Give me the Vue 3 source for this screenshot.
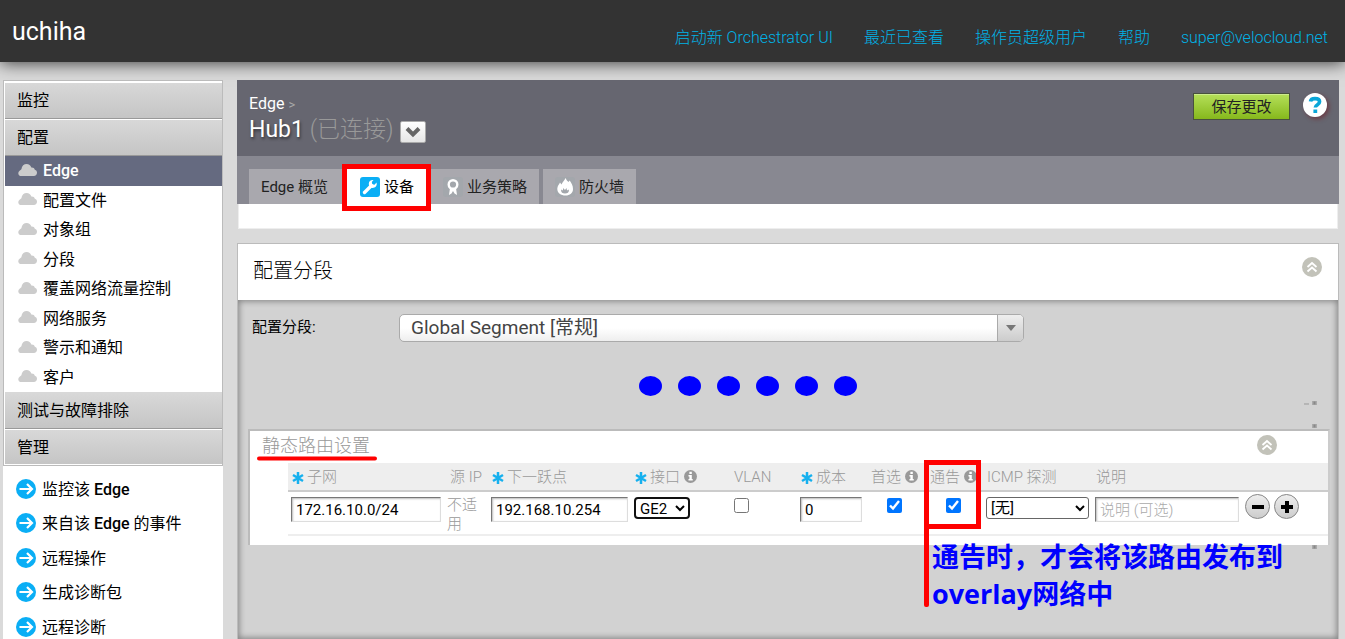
<script setup>
import { ref } from 'vue'

const topLinks = ['启动新 Orchestrator UI', '最近已查看', '操作员超级用户', '帮助', 'super@velocloud.net']
const configItems = ['Edge', '配置文件', '对象组', '分段', '覆盖网络流量控制', '网络服务', '警示和通知', '客户']
const shortcuts = [
  { before: '监控该 ', strong: 'Edge', after: '' },
  { before: '来自该 ', strong: 'Edge', after: ' 的事件' },
  { before: '远程操作', strong: '', after: '' },
  { before: '生成诊断包', strong: '', after: '' },
  { before: '远程诊断', strong: '', after: '' },
]

const subnet = ref('172.16.10.0/24')
const nextHop = ref('192.168.10.254')
const cost = ref('0')
const vlan = ref(false)
const preferred = ref(true)
const advertise = ref(true)
const description = ref('')
</script>

<template>
  <div class="page">
    <header class="topbar">
      <div class="brand">uchiha</div>
      <nav class="toplinks">
        <a v-for="link in topLinks" :key="link" href="#">{{ link }}</a>
      </nav>
    </header>

    <div class="layout">
      <aside class="sidebar">
        <nav class="menu">
          <a class="group" href="#">监控</a>
          <a class="group" href="#">配置</a>
          <ul class="items">
            <li v-for="(item, i) in configItems" :key="item" :class="{ active: i === 0 }">
              <a href="#">
                <svg class="cloud" viewBox="0 0 20 12" aria-hidden="true">
                  <path d="M3 12a3 3 0 0 1-.4-5.2L4.400 5.200C4.800 1.800 7 0 9.600 0c2.400 0 4 1.400 4.700 3.500 2-.2 3 .7 3.500 2.200C19.300 6.200 20 7.200 20 8.600 20 10.600 18.700 12 16.800 12z" />
                </svg>
                <span>{{ item }}</span>
              </a>
            </li>
          </ul>
          <a class="group" href="#">测试与故障排除</a>
          <a class="group" href="#">管理</a>
        </nav>
        <ul class="shortcuts">
          <li v-for="s in shortcuts" :key="s.before">
            <a href="#">
              <svg class="arrow" viewBox="0 0 20 20" aria-hidden="true">
                <circle cx="10" cy="10" r="10" fill="#0aaef5" />
                <path d="M3.500 10h12M11 5l5 5-5 5" fill="none" stroke="#fff" stroke-width="2.200" />
              </svg>
              <span>{{ s.before }}<b v-if="s.strong">{{ s.strong }}</b>{{ s.after }}</span>
            </a>
          </li>
        </ul>
      </aside>

      <main class="main">
        <section class="head">
          <div class="titlebar">
            <div class="titles">
              <div class="crumb"><a href="#">Edge</a> <span>&gt;</span></div>
              <div class="name">
                <h1>Hub1 <span>(已连接)</span></h1>
                <button class="drop" type="button" aria-label="切换 Edge">
                  <svg viewBox="0 0 16 12" aria-hidden="true"><path d="M2 2.500l6 6 6-6" fill="none" stroke="#666" stroke-width="4" /></svg>
                </button>
              </div>
            </div>
            <div class="actions">
              <button class="save" type="button">保存更改</button>
              <button class="help" type="button" aria-label="帮助">
                <svg viewBox="0 0 24 24" aria-hidden="true">
                  <circle cx="12" cy="12" r="12" fill="#fff" />
                  <path d="M7.500 8.500C7.800 6.200 9.500 5.600 12 5.600s4.600 1 4.600 3.200c0 3-4.200 2.700-4.300 5.700" fill="none" stroke="#0aa6d8" stroke-width="3.600" />
                  <path d="M10.400 16.500h3.800V20h-3.800z" fill="#0aa6d8" />
                </svg>
              </button>
            </div>
          </div>
          <nav class="tabs">
            <a class="tab overview" href="#">Edge 概览</a>
            <a class="tab current" href="#">
              <svg viewBox="0 0 20 20" aria-hidden="true">
                <rect width="20" height="20" rx="3" fill="#0aaef5" />
                <path d="M4.500 15.500l7-7" stroke="#fff" stroke-width="3.400" stroke-linecap="round" />
                <path d="M16.500 5.500a4 4 0 1 1-3-2.500l-1.700 2 .5 2.300 2.200.4z" fill="#fff" />
              </svg>
              <span>设备</span>
              <i class="mark-tab"></i>
            </a>
            <a class="tab policy" href="#">
              <svg viewBox="0 0 20 20" aria-hidden="true">
                <rect width="20" height="20" rx="3" fill="#a3a7ac" />
                <path d="M7 11l-1 7 2.500-1.500L10 14l1.500 2.500L14 18l-1-7z" fill="#fff" />
                <circle cx="10" cy="7.500" r="4.300" fill="#a3a7ac" stroke="#fff" stroke-width="2.400" />
              </svg>
              <span>业务策略</span>
            </a>
            <a class="tab firewall" href="#">
              <svg viewBox="0 0 20 20" aria-hidden="true">
                <rect width="20" height="20" rx="3" fill="#a3a7ac" />
                <path d="M10.500 1c.8 2 2 3 3 4l1.200-1.500C16.500 6 18 8.500 18 12c0 4-3 6.500-7.500 6.500S2 16 2.300 11.500C2.500 9 4 7.500 5 5.500l1.500 2C7.500 5 9.500 3.500 10.500 1z" fill="#fff" />
                <path d="M6 12.500l2 1V11l2 2 1.500-2 .5 2.500 2-1c0 3-1.500 4-4 4s-4-1-4-4z" fill="#a3a7ac" />
              </svg>
              <span>防火墙</span>
            </a>
          </nav>
          <div class="strip"></div>
        </section>

        <section class="segment">
          <div class="segment-head">
            <h2>配置分段</h2>
            <button class="collapse" type="button" aria-label="折叠">
              <svg viewBox="0 0 20 20" aria-hidden="true">
                <circle cx="10" cy="10" r="10" fill="#c2c2b9" />
                <path d="M5.500 10L10 6l4.500 4M5.500 14.500l4.500-4 4.500 4" fill="none" stroke="#fff" stroke-width="1.800" />
              </svg>
            </button>
          </div>

          <div class="segment-body">
            <div class="field">
              <label for="segment">配置分段:</label>
              <div class="combo">
                <select id="segment"><option>Global Segment [常规]</option></select>
                <span class="combo-arrow"></span>
              </div>
            </div>

            <div class="dots"><i v-for="n in 6" :key="n"></i></div>

            <div class="routes">
              <svg class="ticks" viewBox="0 0 30 152" aria-hidden="true">
                <path d="M0 4h5" stroke="#999" />
                <path d="M8 3h5M8 26h5M8 147h5" stroke="#aaa" stroke-width="4" />
                <path d="M9.500 3h2M9.500 26h2M9.500 147h2" stroke="#888" stroke-width="3" />
              </svg>
              <div class="routes-head">
                <h3>静态路由设置
                  <svg class="underline" viewBox="0 0 120 5" aria-hidden="true"><path d="M2 2.500h116" fill="none" stroke="red" stroke-width="4" stroke-linecap="round" /></svg>
                </h3>
                <button class="collapse" type="button" aria-label="折叠">
                  <svg viewBox="0 0 20 20" aria-hidden="true">
                    <circle cx="10" cy="10" r="10" fill="#c2c2b9" />
                    <path d="M5.500 10L10 6l4.500 4M5.500 14.500l4.500-4 4.500 4" fill="none" stroke="#fff" stroke-width="1.800" />
                  </svg>
                </button>
              </div>
              <table>
                <colgroup>
                  <col class="c-subnet" /><col class="c-source" /><col class="c-hop" /><col class="c-if" /><col class="c-vlan" />
                  <col class="c-cost" /><col class="c-flag" /><col class="c-flag" /><col class="c-icmp" /><col class="c-desc" /><col />
                </colgroup>
                <thead>
                  <tr>
                    <th class="req"><svg class="star" viewBox="0 0 12 12"><path d="M6 0v12M1 3l10 6M1 9l10-6" /></svg>子网</th>
                    <th class="src">源 IP</th>
                    <th class="req"><svg class="star" viewBox="0 0 12 12"><path d="M6 0v12M1 3l10 6M1 9l10-6" /></svg>下一跃点</th>
                    <th class="req iface"><svg class="star" viewBox="0 0 12 12"><path d="M6 0v12M1 3l10 6M1 9l10-6" /></svg>接口<svg class="info" viewBox="0 0 14 14"><circle cx="7" cy="7" r="7" fill="#999" /><path d="M5.800 2h2.600v2.200H5.800zM4.800 5.500h3.600v4.300h1v1.600H4.800V9.800h1V7h-1z" fill="#fff" /></svg></th>
                    <th>VLAN</th>
                    <th class="req"><svg class="star" viewBox="0 0 12 12"><path d="M6 0v12M1 3l10 6M1 9l10-6" /></svg>成本</th>
                    <th class="flag">首选<svg class="info" viewBox="0 0 14 14"><circle cx="7" cy="7" r="7" fill="#999" /><path d="M5.800 2h2.600v2.200H5.800zM4.800 5.500h3.600v4.300h1v1.600H4.800V9.800h1V7h-1z" fill="#fff" /></svg></th>
                    <th class="flag">通告<svg class="info" viewBox="0 0 14 14"><circle cx="7" cy="7" r="7" fill="#999" /><path d="M5.800 2h2.600v2.200H5.800zM4.800 5.500h3.600v4.300h1v1.600H4.800V9.800h1V7h-1z" fill="#fff" /></svg></th>
                    <th>ICMP 探测</th>
                    <th>说明</th>
                    <th></th>
                  </tr>
                </thead>
                <tbody>
                  <tr>
                    <td><input v-model="subnet" class="text" type="text" aria-label="子网" /></td>
                    <td class="na">不适用</td>
                    <td><input v-model="nextHop" class="text" type="text" aria-label="下一跃点" /></td>
                    <td><select class="pick iface-pick" aria-label="接口"><option>GE2</option></select></td>
                    <td class="vlan"><input v-model="vlan" type="checkbox" aria-label="VLAN" /></td>
                    <td><input v-model="cost" class="text" type="text" aria-label="成本" /></td>
                    <td class="flag"><input v-model="preferred" type="checkbox" aria-label="首选" /></td>
                    <td class="flag advertise">
                      <input v-model="advertise" type="checkbox" aria-label="通告" />
                      <i class="mark-box"></i>
                      <i class="mark-line"></i>
                      <p class="note">通告时，才会将该路由发布到<br />overlay网络中</p>
                    </td>
                    <td><select class="pick" aria-label="ICMP 探测"><option>[无]</option></select></td>
                    <td><input v-model="description" class="text" type="text" placeholder="说明 (可选)" aria-label="说明" /></td>
                    <td>
                      <div class="row-actions">
                        <button type="button" aria-label="删除"><svg viewBox="0 0 14 14"><path d="M1 7h12" /></svg></button>
                        <button type="button" aria-label="添加"><svg viewBox="0 0 14 14"><path d="M1 7h12M7 1v12" /></svg></button>
                      </div>
                    </td>
                  </tr>
                </tbody>
              </table>
            </div>
          </div>
        </section>
      </main>
    </div>
  </div>
</template>

<style>
body {
  margin: 0;
  background: #dadada;
}
</style>

<style scoped>
.page {
  display: flex;
  flex-direction: column;
  height: 100vh;
  overflow: hidden;
  background: #dadada;
  color: #000;
  font: 16px/20px Roboto, "Noto Sans CJK SC", sans-serif;
}
.page * {
  box-sizing: border-box;
}
a {
  color: inherit;
  text-decoration: none;
}
ul, h1, h2, h3, p {
  margin: 0;
  padding: 0;
  list-style: none;
  font-weight: 400;
}
button {
  padding: 0;
  border: 0;
  background: none;
  font: inherit;
}
svg {
  display: block;
  flex: none;
}

.topbar {
  display: flex;
  flex: none;
  justify-content: space-between;
  height: 62px;
  padding: 0 17px 0 12px;
  background: #333;
  box-shadow: 0 1px 16px rgba(0, 0, 0, 0.75);
}
.brand {
  color: #fff;
  font-size: 25px;
  line-height: 64px;
}
.toplinks {
  display: flex;
  gap: 31px;
  padding-top: 28px;
  color: #00b2e6;
  font-weight: 300;
}

.layout {
  display: flex;
  flex: 1;
  gap: 14px;
  min-height: 0;
  padding: 18px 6px 0 3px;
}

.sidebar {
  display: flex;
  flex: none;
  flex-direction: column;
  width: 220px;
  background: #fff;
}
.menu {
  padding: 1px 0 1px 1px;
  border: 1px solid #bbb;
}
.group {
  display: block;
  height: 37px;
  padding-left: 12px;
  border-top: 1px solid #fff;
  border-bottom: 1px solid #999;
  background: linear-gradient(#d8d8d8, #c5c5c5);
  line-height: 35px;
}
.items + .group {
  border-top-color: #d8d8d8;
}
.group:last-child {
  height: 35px;
  border-bottom: 0;
}
.items li {
  height: 29px;
}
.items li:nth-child(odd) {
  height: 30px;
}
.items a {
  display: flex;
  align-items: center;
  gap: 6px;
  height: 100%;
  padding-left: 12px;
}
.items .active {
  background: #656a80;
  color: #fff;
  font-weight: 500;
}
.cloud {
  width: 20px;
  height: 12px;
  margin-bottom: 3px;
  fill: #ccc;
}
.shortcuts {
  padding-top: 6px;
}
.shortcuts li {
  height: 34px;
}
.shortcuts li:nth-child(odd) {
  height: 35px;
}
.shortcuts a {
  display: flex;
  align-items: center;
  gap: 6px;
  height: 100%;
  padding-left: 13px;
}
.shortcuts b {
  font-weight: 500;
}
.arrow {
  width: 20px;
  height: 20px;
  margin-bottom: 2px;
}

.main {
  display: flex;
  flex: 1;
  flex-direction: column;
  gap: 14px;
  min-width: 0;
}
.titlebar {
  display: flex;
  justify-content: space-between;
  height: 76px;
  padding: 0 12px;
  background: #666670;
  color: #fff;
}
.titles {
  padding-top: 14px;
}
.crumb span {
  color: #aaa;
  font-size: 13px;
}
.name {
  display: flex;
  align-items: center;
  gap: 6px;
}
h1 {
  font-size: 23px;
  line-height: 30px;
  text-shadow: 1px 2px 3px rgba(0, 0, 0, 0.5);
}
h1 span {
  color: #999;
  font-weight: 300;
  text-shadow: none;
}
.drop {
  display: grid;
  place-items: center;
  width: 26px;
  height: 22px;
  margin-top: 3px;
  border: 1px solid #aaa;
  border-radius: 2px;
  background: linear-gradient(#fff, #e6e6e6);
}
.drop svg {
  width: 16px;
  height: 12px;
}
.actions {
  display: flex;
  align-items: flex-start;
  gap: 13px;
  padding-top: 13px;
}
.save {
  width: 97px;
  height: 27px;
  border: 1px solid #48523c;
  background: linear-gradient(#b5e05a, #86b81c);
  box-shadow: inset 0 1px #cdec8c;
  color: #222;
  font-size: 15px;
}
.help {
  width: 24px;
  height: 24px;
  border-radius: 50%;
  box-shadow: 2px 2px 4px rgba(110, 40, 50, 0.7);
}

.tabs {
  display: flex;
  gap: 4px;
  height: 48px;
  padding: 13px 12px 0;
  background: #888891;
}
.tab {
  position: relative;
  display: flex;
  align-items: center;
  gap: 4px;
  height: 35px;
  padding: 0 12px;
  background: #a9a8ae;
  color: #222;
  font-size: 15px;
}
.tab svg {
  width: 20px;
  height: 20px;
}
.overview {
  padding-right: 15px;
}
.current {
  padding: 0 13px;
  background: #fff;
  color: #000;
}
.mark-tab {
  position: absolute;
  inset: -5px -4px -7px -5px;
  z-index: 1;
  border: 5px solid red;
}
.strip {
  height: 25px;
  margin: 0 1px;
  border: 1px solid #eee;
  border-top: 0;
  background: #fff;
}

.segment {
  display: flex;
  flex: 1;
  flex-direction: column;
  border: 1px solid #bbb;
  border-bottom: 0;
}
.segment-head {
  display: flex;
  align-items: flex-start;
  justify-content: space-between;
  height: 56px;
  padding: 13px 16px 0 15px;
  background: #fff;
}
h2 {
  font-size: 20px;
  font-weight: 300;
  line-height: 28px;
}
.collapse svg {
  width: 20px;
  height: 20px;
}
.segment-body {
  flex: 1;
  padding: 14px 8px 0 10px;
  background: #d2d2d2;
  box-shadow: inset 0 0 6px 1px rgba(0, 0, 0, 0.4);
}
.field {
  display: flex;
  padding-left: 4px;
}
.field label {
  width: 147px;
  font-size: 15px;
  line-height: 26px;
}
.combo {
  position: relative;
  width: 625px;
}
.combo select {
  width: 100%;
  height: 28px;
  padding: 0 36px 0 11px;
  appearance: none;
  border: 1px solid #aaa;
  border-radius: 5px;
  background: linear-gradient(#fff 50%, #eee);
  color: #444;
  font: inherit;
  font-size: 19px;
}
.combo-arrow {
  position: absolute;
  top: 1px;
  right: 1px;
  bottom: 1px;
  display: grid;
  place-items: center;
  width: 26px;
  border-left: 1px solid #aaa;
  border-radius: 0 4px 4px 0;
  background: linear-gradient(#eee, #ccc);
  pointer-events: none;
}
.combo-arrow::after {
  content: "";
  border: 5px solid transparent;
  border-top: 6px solid #777;
  border-bottom: 0;
}
.dots {
  display: flex;
  gap: 16px;
  padding: 34px 0 33px 391px;
}
.dots i {
  width: 23px;
  height: 20px;
  border-radius: 50%;
  background: #00f;
}

.routes {
  position: relative;
  padding-bottom: 9px;
  border: 2px solid #bbb;
  border-right-color: #ccc;
  border-bottom: 0;
  background: #fff;
  color: #999;
}
.ticks {
  position: absolute;
  top: -31px;
  right: -6px;
  z-index: -1;
  width: 30px;
  height: 152px;
}
.segment-body {
  position: relative;
  z-index: 0;
}
.routes-head {
  display: flex;
  align-items: flex-start;
  justify-content: space-between;
  height: 32px;
  padding: 4px 51px 0 12px;
}
h3 {
  position: relative;
  font-size: 18px;
  font-weight: 300;
  line-height: 22px;
}
.underline {
  position: absolute;
  top: 21px;
  left: -5px;
  width: 120px;
  height: 5px;
}
table {
  width: calc(100% - 38px);
  margin-left: 38px;
  border-collapse: collapse;
  table-layout: fixed;
  font-size: 15px;
}
.c-subnet { width: 156px; }
.c-source { width: 44px; }
.c-hop { width: 143px; }
.c-if { width: 99px; }
.c-vlan { width: 67px; }
.c-cost { width: 68px; }
.c-flag { width: 59px; }
.c-icmp { width: 109px; }
.c-desc { width: 150px; }
th {
  height: 28px;
  padding: 0 0 0 4px;
  border-bottom: 2px solid #ccc;
  background: #eee;
  font-weight: 300;
  text-align: left;
  white-space: nowrap;
}
.src {
  padding-left: 6px;
}
th.flag {
  padding: 0;
  text-align: center;
}
td.flag {
  padding: 5px 0 0;
  text-align: center;
}
.star {
  display: inline-block;
  width: 12px;
  height: 12px;
  margin-right: 3px;
  vertical-align: -2px;
  stroke: #16b0ee;
  stroke-width: 2.500;
}
.info {
  display: inline-block;
  width: 13px;
  height: 13px;
  margin-left: 4px;
  vertical-align: -1px;
}
td {
  height: 44px;
  padding: 5px 3px 0;
  border-bottom: 2px solid #eee;
  vertical-align: top;
}
.na {
  padding: 4px 6px 0 3px;
  font-weight: 300;
  line-height: 19px;
}
.text {
  display: block;
  width: 100%;
  height: 25px;
  padding: 0 4px;
  border: 1px solid #ddd;
  border-top-color: #777;
  border-left-color: #777;
  background: #fff;
  box-shadow: inset 1px 1px 2px #bbb;
  color: #000;
  font: inherit;
}
.text::placeholder {
  color: #aaa;
  font-weight: 300;
}
.pick {
  display: block;
  width: 103px;
  height: 22px;
  padding: 0;
  border: 1px solid #666;
  border-radius: 3px;
  background: #fff;
  color: #000;
  font: inherit;
}
.iface-pick {
  width: 56px;
  border: 2px solid #111;
  border-radius: 4px;
}
input[type="checkbox"] {
  display: inline-block;
  width: 15px;
  height: 15px;
  margin: 1px;
  vertical-align: top;
}
.advertise {
  position: relative;
}
.mark-box {
  position: absolute;
  top: -32px;
  left: 0;
  width: 57px;
  height: 69px;
  border: 5px solid red;
}
.mark-line {
  position: absolute;
  top: 32px;
  left: 0;
  width: 5px;
  height: 83px;
  border-radius: 2px;
  background: red;
}
.note {
  position: absolute;
  top: 46px;
  left: 8px;
  color: #00f;
  font: 700 27px/37px "Open Sans", "Noto Sans CJK SC", sans-serif;
  text-align: left;
  white-space: nowrap;
}
.row-actions {
  display: flex;
  gap: 4px;
}
.row-actions button {
  display: grid;
  place-items: center;
  width: 25px;
  height: 25px;
  margin-top: -3px;
  border: 1px solid #888;
  border-radius: 50%;
  background: linear-gradient(#eee, #ccc);
}
.row-actions svg {
  width: 14px;
  height: 14px;
  stroke: #000;
  stroke-width: 4;
}
</style>
